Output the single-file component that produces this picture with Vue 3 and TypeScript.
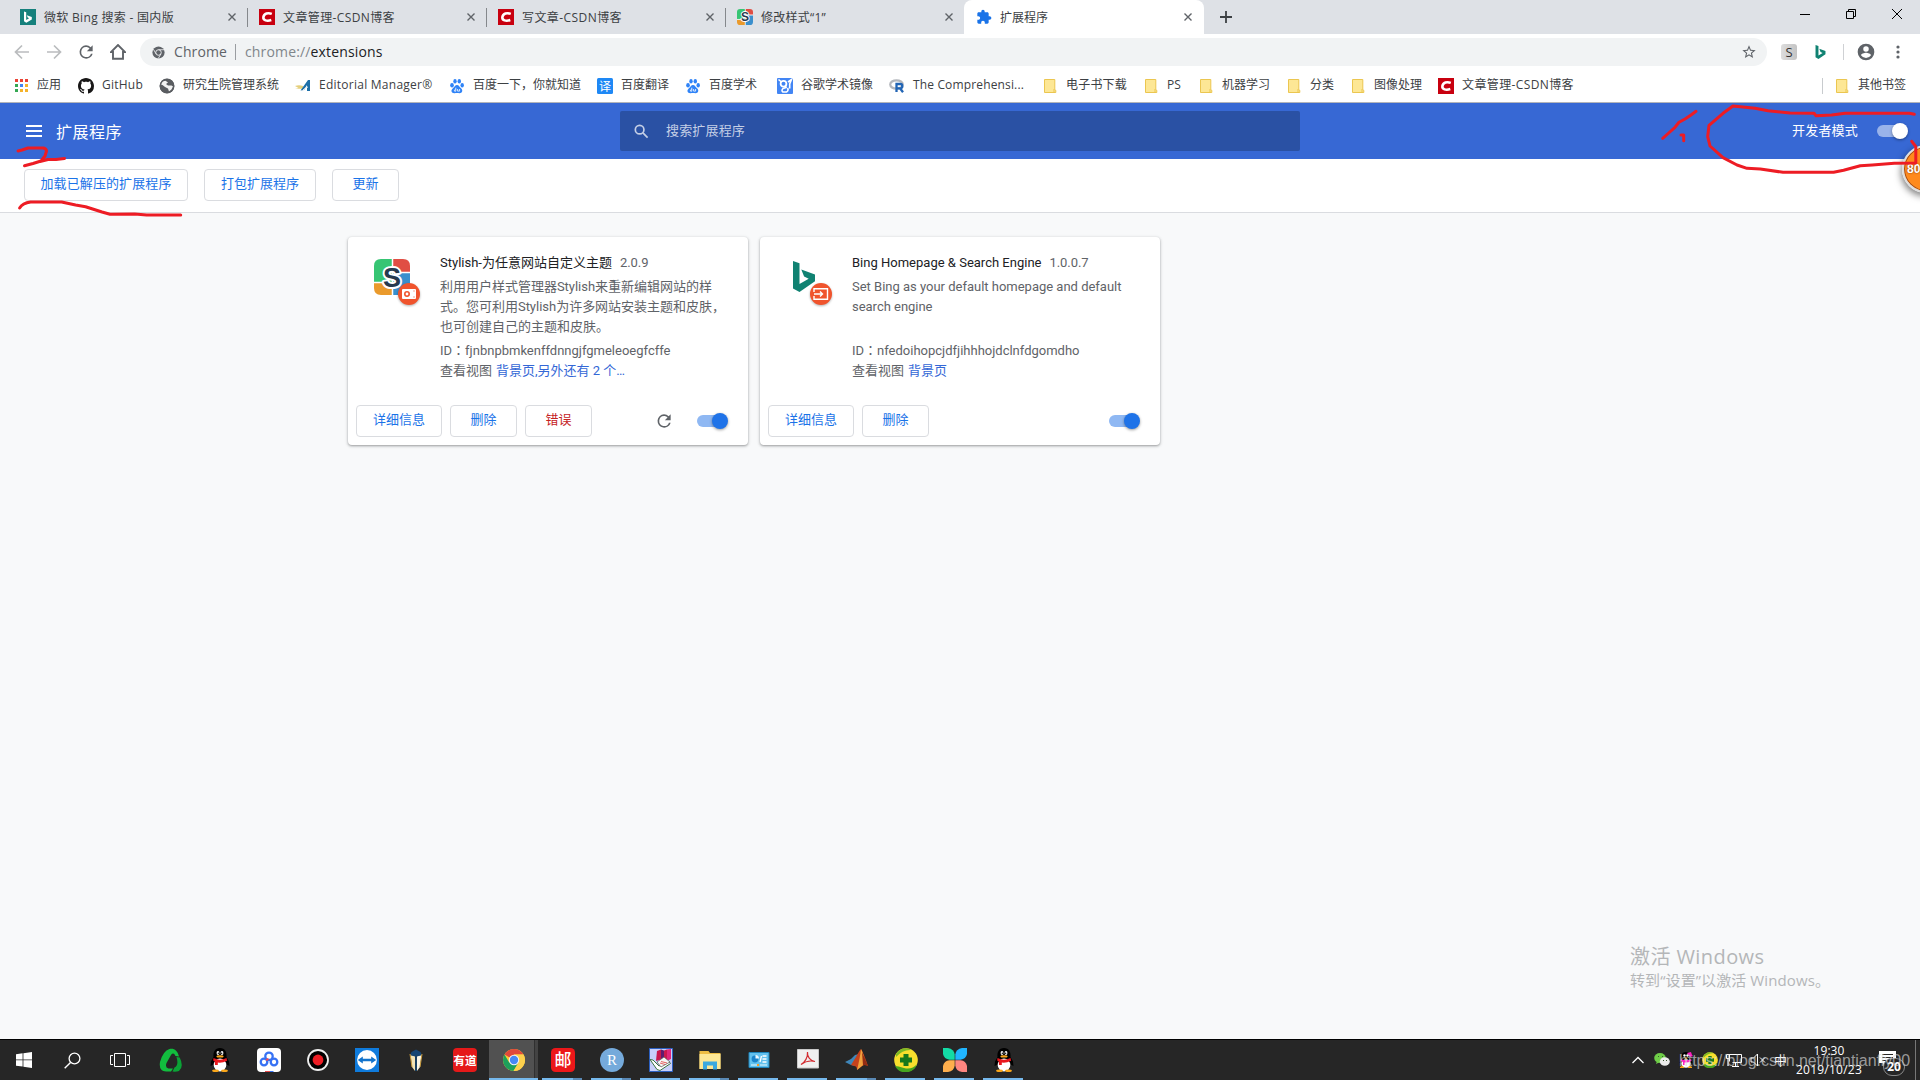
<script setup lang="ts">
import { ref } from 'vue'

interface Tab { icon: string; title: string; w: number; active?: boolean }
interface Bookmark { icon: string; label: string; w: number; step: number }
interface Extension {
  icon: string; name: string; nameW: number; version: string; versionW: number
  desc: { t: string; w: number }[]
  id: string; idW: number; view: string; viewW: number; error?: boolean; reload?: boolean
}

const tabs = ref<Tab[]>([
  { icon: 'bing', title: '微软 Bing 搜索 - 国内版', w: 130 },
  { icon: 'csdn', title: '文章管理-CSDN博客', w: 112 },
  { icon: 'csdn', title: '写文章-CSDN博客', w: 100 },
  { icon: 'stylish', title: '修改样式“1”', w: 65 },
  { icon: 'puzzle', title: '扩展程序', w: 48, active: true },
])

const bookmarks: Bookmark[] = [
  { icon: 'apps', label: '应用', w: 24, step: 65 },
  { icon: 'github', label: 'GitHub', w: 41, step: 81 },
  { icon: 'globe', label: '研究生院管理系统', w: 96, step: 136 },
  { icon: 'em', label: 'Editorial Manager®', w: 113.5, step: 154 },
  { icon: 'paw', label: '百度一下，你就知道', w: 108, step: 148 },
  { icon: 'yi', label: '百度翻译', w: 48, step: 88 },
  { icon: 'paw', label: '百度学术', w: 48, step: 92 },
  { icon: 'scholar', label: '谷歌学术镜像', w: 72, step: 112 },
  { icon: 'rproj', label: 'The Comprehensi...', w: 111, step: 153 },
  { icon: 'folder', label: '电子书下载', w: 61, step: 101 },
  { icon: 'folder', label: 'PS', w: 14, step: 55 },
  { icon: 'folder', label: '机器学习', w: 48, step: 88 },
  { icon: 'folder', label: '分类', w: 24, step: 64 },
  { icon: 'folder', label: '图像处理', w: 48, step: 88 },
  { icon: 'csdn', label: '文章管理-CSDN博客', w: 112, step: 135 },
]

const extensions = ref<Extension[]>([
  {
    icon: 'stylish', name: 'Stylish-为任意网站自定义主题', nameW: 172, version: '2.0.9', versionW: 28.5,
    desc: [
      { t: '利用用户样式管理器Stylish来重新编辑网站的样', w: 272 },
      { t: '式。您可利用Stylish为许多网站安装主题和皮肤，', w: 285 },
      { t: '也可创建自己的主题和皮肤。', w: 169 },
    ],
    id: 'fjnbnpbmkenffdnngjfgmeleoegfcffe', idW: 230.5, view: '背景页,另外还有 2 个…', viewW: 129,
    error: true, reload: true,
  },
  {
    icon: 'bing', name: 'Bing Homepage & Search Engine', nameW: 189.5, version: '1.0.0.7', versionW: 39,
    desc: [
      { t: 'Set Bing as your default homepage and default', w: 269.5 },
      { t: 'search engine', w: 80.5 },
    ],
    id: 'nfedoihopcjdfjihhhojdclnfdgomdho', idW: 227.5, view: '背景页', viewW: 39,
  },
])

const tasks = [
  { icon: 'green' }, { icon: 'qq' }, { icon: 'netdisk' }, { icon: 'rec' }, { icon: 'tv' }, { icon: 'lamp' }, { icon: 'youdao' },
  { icon: 'chrome', open: true, active: true }, { icon: 'mail', open: true, multi: true }, { icon: 'rstudio', open: true, multi: true },
  { icon: 'books', open: true }, { icon: 'explorer', open: true, multi: true }, { icon: 'panel', open: true }, { icon: 'pdf', open: true },
  { icon: 'matlab', open: true, multi: true }, { icon: 's360', open: true }, { icon: 'petals', open: true }, { icon: 'qq', open: true },
]

// Spreads the letters of a label so that it takes the given width.
const vFit = {
  mounted(el: HTMLElement, b: { value: number }) {
    const n = Array.from(el.textContent ?? '').length
    const natural = el.getBoundingClientRect().width
    el.style.letterSpacing = `${(b.value - natural) / n}px`
  },
}
</script>

<template>
  <div class="screen">
    <svg class="defs">
      <symbol id="bing" viewBox="0 0 16 16"><rect width="16" height="16" fill="#15807c" /><path d="M4 2.5l2.2.8v7.8l2.9-1.8-1.4-.7-.9-2.3 5 1.8v2.5l-5.5 3.2L4 12.300z" fill="#fff" /></symbol>
      <symbol id="bingb" viewBox="0 0 22 31"><path d="M0 0l6.500 2.300V23l9.200-5.300-4.600-2.100-2.800-7.200L22 13.500v6.800L6.500 31 0 27.400z" fill="#108272" /></symbol>
      <symbol id="csdn" viewBox="0 0 16 16"><rect width="16" height="16" fill="#c8000f" /><path d="M12.800 4.900C9 3.500 5 4.400 4.400 8c-.5 3.500 3.600 4.500 7.900 3.100" fill="none" stroke="#fff" stroke-width="2.600" /></symbol>
      <symbol id="stylish" viewBox="0 0 36 36">
        <path d="M7 0h11v23H0V7q0-7 7-7z" fill="#36c573" /><path d="M19 0h10q7 0 7 7v6H19z" fill="#e04e44" />
        <path d="M19 14h17v15q0 7-7 7H19z" fill="#3a8fcd" /><path d="M0 24h18v12H7q-7 0-7-7z" fill="#ea9a2c" />
        <path d="M18.500 0v36M0 23.500h18M19 13.500h17" stroke="#fff" stroke-width="1.500" />
        <text x="18" y="27.500" text-anchor="middle" font-family="Liberation Sans, sans-serif" font-size="27" font-weight="700" fill="#263a4f" stroke="#fff" stroke-width="4" paint-order="stroke" stroke-linejoin="round">S</text>
      </symbol>
      <symbol id="puzzle" viewBox="0 0 24 24"><path fill="#1a73e8" d="M20.500 11H19V7c0-1.100-.9-2-2-2h-4V3.500C13 2.100 11.900 1 10.500 1S8 2.100 8 3.500V5H4c-1.100 0-2 .9-2 2v3.800h1.500c1.500 0 2.700 1.200 2.700 2.700S5 16.200 3.500 16.200H2V20c0 1.100.9 2 2 2h3.800v-1.500c0-1.500 1.200-2.700 2.700-2.700s2.700 1.200 2.700 2.700V22H17c1.100 0 2-.9 2-2v-4h1.500c1.400 0 2.500-1.100 2.500-2.500S21.900 11 20.500 11z" /></symbol>
      <symbol id="apps" viewBox="0 0 16 16"><g fill="#ea4335"><path d="M2 1h3v3H2zM7 1h3v3H7zM12 1h3v3h-3z" /></g><path fill="#34a853" d="M2 6h3v3H2zM2 11h3v3H2z" /><path fill="#4285f4" d="M7 6h3v3H7z" /><path fill="#f5b32b" d="M12 6h3v3h-3zM7 11h3v3H7zM12 11h3v3h-3z" /></symbol>
      <symbol id="github" viewBox="0 0 16 16"><path fill="#181717" d="M8 0C3.580 0 0 3.580 0 8c0 3.540 2.290 6.530 5.470 7.590.4.070.55-.17.55-.38 0-.19-.01-.82-.01-1.490-2.010.37-2.530-.49-2.690-.94-.09-.23-.48-.94-.82-1.130-.28-.15-.68-.52-.01-.53.63-.01 1.080.58 1.230.82.72 1.210 1.870.87 2.330.66.070-.52.28-.87.51-1.070-1.780-.2-3.640-.89-3.640-3.950 0-.87.31-1.590.82-2.150-.08-.2-.36-1.020.08-2.120 0 0 .67-.21 2.200.82.640-.18 1.320-.27 2-.27s1.360.09 2 .27c1.530-1.040 2.200-.82 2.200-.82.440 1.100.16 1.920.08 2.120.51.56.82 1.270.82 2.150 0 3.070-1.870 3.750-3.650 3.950.29.25.54.73.54 1.480 0 1.070-.01 1.930-.01 2.200 0 .21.15.46.55.38A8.010 8.010 0 0016 8c0-4.420-3.580-8-8-8z" /></symbol>
      <symbol id="globe" viewBox="0 0 16 16"><circle cx="8" cy="8" r="7.300" fill="#5a5d61" /><path d="M3 3.500l3.500-.7L9 4.500 7 6l2 1.500h3.500l1.500 1-1.500 3-2.500 2-1-3L6 9 3.500 7 2 6.500z" fill="#fff" opacity=".92" /><circle cx="8" cy="8" r="6.800" fill="none" stroke="#5a5d61" stroke-width="1.300" /></symbol>
      <symbol id="em" viewBox="0 0 16 16"><path d="M0 8q4-1.500 8 0l2 2.800H0L3.500 10z" fill="#e5cf7c" /><path d="M13 2L5.500 12.500 9 12l3-5v6h3V2z" fill="#1d6fa8" /><path d="M8 12q3-3 5-3" stroke="#e8f1f6" stroke-width="1" fill="none" /></symbol>
      <symbol id="paw" viewBox="0 0 16 16"><g fill="#2f83f7"><ellipse cx="3" cy="7.200" rx="1.800" ry="2.200" /><ellipse cx="6" cy="3.300" rx="1.700" ry="2.300" /><ellipse cx="10.300" cy="3.300" rx="1.700" ry="2.300" /><ellipse cx="13.200" cy="7.200" rx="1.700" ry="2.200" /><path d="M8 7c2 0 2.500 2 4 3.300 2.500 2.300 1 5-1.500 4.900-2-.3-3-.3-5 0-2.800.2-4.300-2.500-1.600-4.900C5.500 9 6 7 8 7z" /></g><path d="M6.800 9.700v3.500H5.600q-1-1 1-2M8.600 11v2.100h2V11" stroke="#fff" stroke-width=".8" fill="none" /></symbol>
      <symbol id="yi" viewBox="0 0 16 16"><rect width="16" height="16" rx="1.500" fill="#1e88f5" /><text x="8" y="12.500" text-anchor="middle" font-size="12" font-family="Noto Sans CJK SC, sans-serif" fill="#fff">译</text></symbol>
      <symbol id="scholar" viewBox="0 0 16 16"><rect width="16" height="16" rx="1" fill="#4285f4" /><circle cx="6.500" cy="5.800" r="2.900" fill="none" stroke="#fff" stroke-width="1.800" /><path d="M1.500 1.500l3 2.500M8.500 8l.5 1.500-3 1q-2 2 0 3.500h3.500q2.500-1.500 1-4M11 4l3.500-2.500L12.700 6v4.500" fill="none" stroke="#fff" stroke-width="1.600" /></symbol>
      <symbol id="rproj" viewBox="0 0 16 16"><ellipse cx="7.500" cy="6.500" rx="6.300" ry="4.200" fill="none" stroke="#b4b7bd" stroke-width="2.200" /><path d="M7.500 14V6h3.800q2 0 2 2.200t-2 2.100H8M11 10.200l3 4" fill="none" stroke="#2265b5" stroke-width="2.300" /></symbol>
      <symbol id="folder" viewBox="0 0 16 16"><path d="M2.500 1.500h10.300v10.200l1 .6v2.200H2.500z" fill="#fde795" stroke="#ebc650" /><path d="M12 14v-3" stroke="#ebc650" /></symbol>
      <symbol id="reload" viewBox="0 0 24 24"><path d="M17.650 6.350A7.960 7.960 0 0012 4a8 8 0 108 10h-2.080A6 6 0 1112 6c1.660 0 3.140.69 4.220 1.780L13 11h7V4z" /></symbol>
      <symbol id="star" viewBox="0 0 24 24"><path fill="#5f6368" d="M22 9.240l-7.190-.62L12 2 9.190 8.630 2 9.240l5.460 4.730L5.820 21 12 17.270 18.180 21l-1.630-7.030zM12 15.400l-3.760 2.270 1-4.280-3.320-2.880 4.380-.38L12 6.100l1.710 4.040 4.380.38-3.320 2.880 1 4.280z" /></symbol>
      <symbol id="user" viewBox="0 0 24 24"><path fill="#5f6368" d="M12 2a10 10 0 100 20 10 10 0 000-20zm0 3a3.300 3.300 0 110 6.600A3.300 3.300 0 0112 5zm0 14.200a7.200 7.200 0 01-6-3.200c0-2 4-3.100 6-3.100s6 1.100 6 3.100a7.200 7.200 0 01-6 3.200z" /></symbol>
      <symbol id="chromeg" viewBox="0 0 16 16"><circle cx="8" cy="8" r="7.500" fill="#5f6368" /><circle cx="8" cy="8" r="3.400" fill="none" stroke="#f1f3f4" stroke-width="1.100" /><path d="M8 4.600h7M5 9.700L1.700 4M11 9.700L7.600 15.500" stroke="#f1f3f4" stroke-width="1" /></symbol>
      <symbol id="green" viewBox="0 0 24 24"><path d="M10.500 1C15 0 18.500 2.500 20 8.500L16.500 8Q14.500 3.800 12 7L7.500 15q-1.700 4.500 2 5.500h4.500L12 23.500H7Q-.5 23 1 14 4 3 10.500 1z" fill="#12bd3e" /><path d="M17.500 9l3.200.5q4.500 9-.7 13.500-3 1-6.500.5l2-4q4.500-2 2-10.500z" fill="#0ba236" /></symbol>
      <symbol id="qq" viewBox="0 0 24 24"><path d="M12 0c-5 0-7 4-6.500 9L3 13.500 2.500 18l3-1.500h13l3 1.500-.5-4.500L18.500 9C19 4 17 0 12 0z" fill="#000" /><ellipse cx="12" cy="17" rx="6.300" ry="6.500" fill="#fff" /><ellipse cx="10" cy="5" rx="1.400" ry="2" fill="#fff" /><ellipse cx="14" cy="5" rx="1.400" ry="2" fill="#fff" /><circle cx="10.300" cy="5.300" r=".7" /><circle cx="13.700" cy="5.300" r=".7" /><ellipse cx="12" cy="8.400" rx="3.600" ry="1.200" fill="#f9a61a" /><path d="M5.500 10q6.500 3.500 13 0l.6 2.700q-5 2.500-9.300 1.800v2.600H7l-.2-3.500-1.600-1z" fill="#e8181e" /><ellipse cx="7.500" cy="22.700" rx="3.400" ry="1.300" fill="#f9a61a" /><ellipse cx="16.500" cy="22.700" rx="3.400" ry="1.300" fill="#f9a61a" /></symbol>
      <symbol id="qqpink" viewBox="0 0 16 16"><path d="M8 0C4 0 3 3 3.500 6L1.500 11h13l-2-5C13 3 12 0 8 0z" fill="#000" /><path d="M9 1l4-1 1 3 1 1-3 1z" fill="#ff1fc4" /><ellipse cx="8" cy="11.500" rx="4.600" ry="4.200" fill="#fff" /><circle cx="6.500" cy="3.500" r="1.200" fill="#fff" /><circle cx="9.500" cy="3.500" r="1.200" fill="#fff" /><path d="M5.500 5.500h5L8 7z" fill="#f9a61a" /><path d="M3 7q5 2.500 10 0l.5 2q-4 2-7 1.500V13H5v-3L2.500 9z" fill="#ff1fc4" /><path d="M2 15q2-2 4 0v1H2zM10 15q2-2 4 0v1h-4z" fill="#f9a61a" /></symbol>
      <symbol id="netdisk" viewBox="0 0 24 24"><rect width="24" height="24" rx="4" fill="#fff" /><g fill="none" stroke="#3772f4" stroke-width="2.300"><circle cx="12" cy="8.300" r="3.700" /><circle cx="7" cy="14" r="3.300" /><circle cx="17" cy="14" r="3.300" /></g><path d="M9 12l2.500-1" stroke="#f04a55" stroke-width="2" /><path d="M8 23h5v1.500H8z" fill="#e84a4a" /><path d="M13 23h3.500v1.500H13z" fill="#3772f4" /></symbol>
      <symbol id="rec" viewBox="0 0 24 24"><circle cx="12" cy="12" r="10" fill="#000" stroke="#eee" stroke-width="1.800" /><circle cx="12" cy="12" r="5.400" fill="#ed1d24" /></symbol>
      <symbol id="tv" viewBox="0 0 24 24"><rect width="24" height="24" fill="#0f7bdc" /><circle cx="12" cy="12" r="9.900" fill="#fff" /><path d="M2.800 12l5-3.500v2.300h8.400V8.500l5 3.500-5 3.500v-2.300H7.800v2.300z" fill="#1273cc" /></symbol>
      <symbol id="lamp" viewBox="0 0 24 24"><path d="M6.500 7l4.500 1v15l-3-4z" fill="#f3e4b6" /><path d="M17.500 7L13 8v15l3-4z" fill="#fbf6e4" /><path d="M7.500 4L12 1.500 16.500 4 18 7l-5 1.500h-2L6 7z" fill="#164673" /><path d="M6 6l2 13M18 6l-2 13" stroke="#c99b3c" stroke-width="1" /><path d="M12 7v16" stroke="#1b4468" stroke-width="1.800" /></symbol>
      <symbol id="youdao" viewBox="0 0 24 24"><rect width="24" height="24" rx="4" fill="#e51919" /><text x="12" y="16.500" text-anchor="middle" font-size="11.500" font-weight="700" font-family="Noto Sans CJK SC, sans-serif" fill="#fff">有道</text></symbol>
      <symbol id="mail" viewBox="0 0 24 24"><rect width="24" height="24" rx="4.500" fill="#ec1719" /><text x="12" y="18" text-anchor="middle" font-size="17" font-weight="500" font-family="Noto Sans CJK SC, sans-serif" fill="#fff">邮</text></symbol>
      <symbol id="chrome" viewBox="0 0 24 24"><circle cx="12" cy="12" r="11" fill="#fcc934" /><path d="M12 12L2.500 6.500A11 11 0 0121.500 6.500H12z" fill="#e0483b" /><path d="M2.500 6.500A11 11 0 0011.500 23L16.500 14.500 12 12 7.200 14.500z" fill="#1da05b" /><path d="M12 6.500h9.500A11 11 0 0111.500 23l5.200-8.500z" fill="#fdd04d" /><circle cx="12" cy="12" r="5.200" fill="#f5f5f5" /><circle cx="12" cy="12" r="4.200" fill="#4688f4" /></symbol>
      <symbol id="rstudio" viewBox="0 0 24 24"><circle cx="12" cy="12" r="12" fill="#75aadb" /><text x="12" y="17" text-anchor="middle" font-size="15" font-family="Liberation Serif, serif" fill="#fff">R</text></symbol>
      <symbol id="books" viewBox="0 0 24 24"><path d="M.5.500h23v23H.5z" fill="#c8cffa" stroke="#2c60c0" /><path d="M8 3l4-1.500v10L7 13z" fill="#c9184d" /><path d="M12 1.500l3 1v10l-3-1z" fill="#5f1a70" /><path d="M15 2.500l3-1V12l-3 1z" fill="#c9184d" /><path d="M18 1.500l4-.5v10l-4 2z" fill="#e0267d" /><path d="M1 11.500l3 .5 6 6 10-4.500 1.500 2L11 22.500l-3-1z" fill="#fff" stroke="#397440" /><path d="M8 14l7-5 6 5-9 5z" fill="#f5f5f5" stroke="#555" stroke-width=".7" /><path d="M12 13.500l6 1.500M11 15l5 1.500" stroke="#d22" stroke-width=".7" /></symbol>
      <symbol id="explorer" viewBox="0 0 24 24"><path d="M1.500 3h9l1.500 2h10.500v16h-21z" fill="#eebd43" /><path d="M1.500 6h21v15h-21z" fill="#fde795" /><path d="M5 21.500v-8h14v8h-4v-4H9v4z" fill="#3ca9df" /></symbol>
      <symbol id="panel" viewBox="0 0 24 24"><path d="M2 4.500h20v15H2z" fill="#62c1ef" stroke="#1e84bb" /><circle cx="8" cy="11" r="3.400" fill="#1b85cd" /><path d="M8.500 10.500V7A3.600 3.600 0 0112 10.500z" fill="#eefaff" /><path d="M15.500 8h4M15.500 11h4M15.500 14h4M14.500 8l-1.500 6" fill="none" stroke="#fff" stroke-width="1.300" /><path d="M4 17h6M13 17h7" stroke="#e9fbff" /><path d="M10 16h2v2h-2z" fill="#f89d22" /></symbol>
      <symbol id="pdf" viewBox="0 0 24 24"><path d="M1.500 1.500h21v18.500h-21z" fill="#f0f0f0" stroke="#c9c9c9" /><path d="M5 16.500C9 14.500 12 9 11.500 4c-.5 5 3 9 7.500 9.500-4-1-10 0-14 3z" fill="none" stroke="#d32c31" stroke-width="1.200" /></symbol>
      <symbol id="matlab" viewBox="0 0 24 24"><path d="M0 14l6-3 4-4 4-1-4 12-4-1z" fill="#3f86b9" /><path d="M6 17l5-8q3-6 5-8 3 5 7 17-4-2-6 0l-5 4q0-4-3-4z" fill="#c6421c" /><path d="M16 1q-1 9-4 21l5-4q2-2 3-1Q19 6 16 1z" fill="#f1a23e" /><path d="M17 4q3 7 6 14-3-1.500-5-.5z" fill="#932d13" /></symbol>
      <symbol id="s360" viewBox="0 0 24 24"><circle cx="12" cy="12" r="11.800" fill="#f8df2d" /><path d="M1 18A12 12 0 0023 16q-5 6-13 4-6-2-9-2z" fill="#46a51f" /><path d="M2 6Q8-3 18 2 9 1 2 9z" fill="#7dba25" /><path d="M9.500 6h5v3.500H18v5h-3.500V18h-5v-3.500H6v-5h3.500z" fill="#18781b" /></symbol>
      <symbol id="petals" viewBox="0 0 24 24"><path d="M0 0h5q6 1 6.700 6.500v5.200H6.500Q1 11 0 6z" fill="#13dba5" /><path d="M24 0h-5q-6 1-6.700 6.500v5.200h5.200Q23 11 24 6z" fill="#20b5ff" /><path d="M0 24h5q6-1 6.700-6.500v-5.200H6.500Q1 13 0 18z" fill="#ffae4c" /><path d="M24 24h-5q-6-1-6.700-6.500v-5.200h5.200Q23 13 24 18z" fill="#ff8680" /></symbol>
    </svg>

    <header class="tabstrip">
      <div v-for="(t, i) in tabs" :key="i" class="tab" :class="{ active: t.active, sep: i < 3 }">
        <svg class="i16"><use :href="'#' + t.icon" /></svg>
        <span v-fit="t.w" class="tabtitle">{{ t.title }}</span>
        <svg class="x" viewBox="0 0 8 8"><path d="M.5.500l7 7M7.500.500l-7 7" stroke="#5f6368" stroke-width="1.400" /></svg>
      </div>
      <svg class="plus" viewBox="0 0 12 12"><path d="M6 0v12M0 6h12" stroke="#3c4043" stroke-width="1.800" /></svg>
      <div class="winbtns">
        <svg viewBox="0 0 10 10"><path d="M0 5.500h10" stroke="#000" /></svg>
        <svg viewBox="0 0 10 10"><path d="M.5 2.500h7v7h-7zM2.500 2.500v-2h7v7h-2" fill="none" stroke="#000" /></svg>
        <svg viewBox="0 0 10 10"><path d="M0 0l10 10M10 0L0 10" stroke="#000" /></svg>
      </div>
    </header>

    <nav class="toolbar">
      <svg class="nav" viewBox="0 0 16 16"><path d="M15 8H2M8 1.500L1.500 8 8 14.500" fill="none" stroke="#babcbe" stroke-width="1.700" /></svg>
      <svg class="nav" viewBox="0 0 16 16"><path d="M1 8h13M8 1.500L14.500 8 8 14.500" fill="none" stroke="#babcbe" stroke-width="1.700" /></svg>
      <svg class="nav big" fill="#5f6368"><use href="#reload" /></svg>
      <svg class="nav" viewBox="0 0 16 16"><path d="M3 14.800V8H1L8 1l7 7h-2v6.800z" fill="none" stroke="#5f6368" stroke-width="1.900" /></svg>
      <div class="omnibox">
        <svg class="site"><use href="#chromeg" /></svg>
        <span v-fit="53" class="scheme">Chrome</span>
        <i class="bar"></i>
        <span v-fit="137.500" class="url"><b>chrome://</b>extensions</span>
        <svg class="star"><use href="#star" /></svg>
      </div>
      <div class="actions">
        <span class="sicon">S</span>
        <svg class="bicon"><use href="#bingb" /></svg>
        <i></i>
        <svg class="user"><use href="#user" /></svg>
        <svg class="dots" viewBox="0 0 4 14"><circle cx="2" cy="2" r="1.600" /><circle cx="2" cy="7" r="1.600" /><circle cx="2" cy="12" r="1.600" /></svg>
      </div>
    </nav>

    <div class="bookmarks">
      <div v-for="(b, i) in bookmarks" :key="i" class="bm" :style="{ width: b.step + 'px' }">
        <svg class="i16"><use :href="'#' + b.icon" /></svg><span v-fit="b.w">{{ b.label }}</span>
      </div>
      <div class="bm other"><svg class="i16"><use href="#folder" /></svg><span v-fit="48">其他书签</span></div>
    </div>

    <div class="appbar">
      <div class="burger"><i></i><i></i><i></i></div>
      <h1 v-fit="66">扩展程序</h1>
      <div class="search">
        <svg viewBox="0 0 16 16"><circle cx="6" cy="6" r="4.600" /><path d="M9.500 9.500l5 5" /></svg>
        <span v-fit="79">搜索扩展程序</span>
      </div>
      <span v-fit="66" class="devlabel">开发者模式</span>
      <div class="toggle light"><i></i></div>
    </div>

    <div class="devbar">
      <button class="load"><span v-fit="131">加载已解压的扩展程序</span></button>
      <button class="pack"><span v-fit="78">打包扩展程序</span></button>
      <button class="upd"><span v-fit="26">更新</span></button>
    </div>

    <main>
      <section v-for="e in extensions" :key="e.name" class="card">
        <div class="info">
          <div class="pic" :class="e.icon">
            <svg v-if="e.icon === 'stylish'" class="logo"><use href="#stylish" /></svg>
            <svg v-else class="logo"><use href="#bingb" /></svg>
            <svg class="badge" viewBox="0 0 22 22">
              <circle cx="11" cy="11" r="11" fill="#f0542d" />
              <template v-if="e.icon === 'stylish'">
                <rect x="4" y="6" width="14" height="10" rx="1" fill="#fff" /><circle cx="9" cy="11" r="2.200" fill="none" stroke="#f0542d" stroke-width="1.600" /><path d="M15.500 7.500h1v1h-1zM15.500 13.500h1v1h-1z" fill="#f0542d" />
              </template>
              <path v-else d="M4 9V5.700h13.500v10.600H4V13M4 11h8M10 8.500l2.500 2.500-2.500 2.500" fill="none" stroke="#fff" stroke-width="1.400" />
            </svg>
          </div>
          <div class="txt">
            <div class="name"><span v-fit="e.nameW">{{ e.name }}</span><span v-fit="e.versionW" class="ver">{{ e.version }}</span></div>
            <div class="desc"><div v-for="d in e.desc" :key="d.t"><span v-fit="d.w">{{ d.t }}</span></div></div>
            <div class="row"><span v-fit="e.idW">ID<b class="colon">：</b>{{ e.id }}</span></div>
            <div class="row view"><span v-fit="52">查看视图</span><a v-fit="e.viewW">{{ e.view }}</a></div>
          </div>
        </div>
        <div class="btns">
          <button class="wide"><span v-fit="52">详细信息</span></button>
          <button><span v-fit="26">删除</span></button>
          <button v-if="e.error" class="err"><span v-fit="26">错误</span></button>
          <svg v-if="e.reload" class="reload" fill="#5f6368"><use href="#reload" /></svg>
          <div class="toggle"><i></i></div>
        </div>
      </section>
    </main>

    <footer class="taskbar">
      <div class="sys"><svg width="16" height="16" viewBox="0 0 16 16"><path fill="#fff" d="M0 2.300l6.600-1v6.200H0zM7.400 1.200L16 0v7.500H7.400zM0 8.300h6.600v6.300L0 13.700zM7.400 8.300H16V16l-8.600-1.300z" /></svg></div>
      <div class="sys"><svg width="17" height="17" viewBox="0 0 17 17"><circle cx="10.500" cy="6.500" r="5.400" fill="none" stroke="#fff" stroke-width="1.300" /><path d="M6.500 10.500L.7 16.300" stroke="#fff" stroke-width="1.400" /></svg></div>
      <div class="sys tv"><svg width="20" height="16" viewBox="0 0 20 16"><path d="M4.500 1.500h11v13h-11zM3 3.500H.5v9H3M17 3.500h2.500v9H17" fill="none" stroke="#fff" /></svg></div>
      <div v-for="(t, i) in tasks" :key="i" class="task" :class="{ open: t.open, active: t.active, multi: t.multi }">
        <svg width="24" height="24"><use :href="'#' + t.icon" /></svg>
      </div>
      <div class="tray">
        <svg width="12" height="8" viewBox="0 0 12 8"><path d="M.5 7L6 1.500 11.500 7" fill="none" stroke="#fff" stroke-width="1.300" /></svg>
        <svg width="16" height="16" viewBox="0 0 16 16"><ellipse cx="6" cy="6" rx="5.800" ry="5" fill="#6fce48" /><path d="M2 12l1-3 3 1z" fill="#6fce48" /><ellipse cx="10.800" cy="9.500" rx="5" ry="4.300" fill="#ececec" /><path d="M4 4.500h1M8 4.500h1M9 8.500h1M12 8.500h1" stroke="#3a5a30" /></svg>
        <svg width="16" height="16"><use href="#qqpink" /></svg>
        <svg width="16" height="16"><use href="#s360" /></svg>
        <svg width="16" height="16" viewBox="0 0 16 16"><path d="M3.500 9.500v-7h12v8h-9M9.500 11v3M6 14.500h7M.5 2.500h3v4h-3zM2 7v7" fill="none" stroke="#fff" /></svg>
        <svg width="16" height="16" viewBox="0 0 16 16"><path d="M1 6h2.500L7.500 2v12L3.500 10H1zM10 5.500l5 5M15 5.500l-5 5" fill="none" stroke="#fff" /></svg>
        <span class="ime">中</span>
        <div class="clock"><span v-fit="31">19:30</span><span v-fit="66">2019/10/23</span></div>
        <div class="note"><svg width="18" height="16" viewBox="0 0 18 16"><path d="M0 0h17v12H8l-4 4v-4H0z" fill="#fff" /><path d="M3 3.500h11M3 6.500h11M3 9.500h7" stroke="#262626" /></svg><b>20</b></div>
      </div>
      <i class="peek"></i>
    </footer>

    <div class="activate"><div><span v-fit="134.500">激活 Windows</span></div><p><span v-fit="200">转到“设置”以激活 Windows。</span></p></div>
    <div class="ball">80</div>
    <svg class="ink" viewBox="0 0 1920 1080">
      <path d="M18 151l4-1 6-2h15.500q3 1 3 3L45 156l-4 5-8 2.500-8.500 2.300M40 161.500l8-2h8l8.500-1" />
      <path d="M19.600 208q3-5 11-6h31l14 3 10 1.700L102 212l8 2.300 24.700-.3 12 1h34" />
      <path d="M1662.700 138.300l6-5.300 6.300-5.700 4-5 6-3.300 6-4 5-3.700M1681 135h2.700v5.700" />
      <path d="M1914.300 114.300l-5-1H1845l-13.300 1.700-15.700.7-2-2.400-24-.3-22-2.300-13-2.400-22-2.300-10 7.300-14 12-1.300 11.400 2.300 9.300 13 11.700 14 7.300 10 3.300 13.300.7 22.700 3.300h50.600l10-2 16.700-4.600 12-.7 22-1.700 21.500-.3v-16.300l-4-5.400" />
    </svg>
    <div class="wm"><span v-fit="231">https://blog.csdn.net/tiantianfly00</span></div>
  </div>
</template>

<style>
body { margin: 0; overflow: hidden; }
</style>

<style scoped>
.screen { position: relative; width: 1920px; height: 1080px; display: flex; flex-direction: column; overflow: hidden; background: #f8f9fa; font-family: "Open Sans", "Noto Sans CJK SC", sans-serif; font-size: 12px; color: #3c4043; box-sizing: border-box; }
.screen *, .screen *::before, .screen *::after { box-sizing: border-box; }
span, a { white-space: nowrap; display: inline-block; }
svg { flex: none; display: block; }
svg.defs { display: none; }
.i16 { width: 16px; height: 16px; }
.tabstrip { height: 34px; flex: none; background: #dee1e6; display: flex; align-items: center; padding-left: 8px; }
.tab { width: 239px; height: 34px; display: flex; align-items: center; padding: 0 12px; position: relative; }
.tab.sep::after { content: ""; position: absolute; right: -1px; top: 8px; height: 19px; width: 1px; background: #85888c; }
.tab.active { background: #fff; border-radius: 8px 8px 0 0; width: 240px; }
.tabtitle { margin-left: 8px; line-height: 16px; padding-top: 1px; }
.x { width: 8px; height: 8px; margin-left: auto; }
.tab .x { margin-right: -1px; }
.tab.active .x { margin-right: 0; }
.plus { width: 12px; height: 12px; margin-left: 16px; }
.winbtns { margin-left: auto; display: flex; gap: 36px; padding-right: 18px; margin-top: -6px; }
.winbtns svg { width: 10px; height: 10px; }
.toolbar { height: 36px; flex: none; background: #fff; display: flex; align-items: center; padding-left: 14px; margin-bottom: -1px; }
.nav { width: 16px; height: 16px; margin-right: 16px; }
.nav.big { width: 20px; height: 20px; margin: 0 14px 0 -2px; }
.omnibox { margin-left: -2px; width: 1627px; height: 28px; border-radius: 14px; background: #f1f3f4; display: flex; align-items: center; padding: 0 10px 0 11px; font-size: 14px; color: #5f6368; }
.site { width: 13px; height: 13px; margin-left: 1px; }
.scheme { margin-left: 9px; }
.scheme, .url { padding-bottom: 2px; }
.bar { width: 1px; height: 16px; background: #9a9da1; margin: 0 9px 0 8px; }
.url { color: #202124; }
.url b { font-weight: 400; color: #80868b; }
.star { width: 16px; height: 16px; margin-left: auto; }
.actions { display: flex; align-items: center; }
.sicon { width: 16px; height: 16px; margin-left: 14px; border-radius: 3px; background: linear-gradient(90deg, #ddd, #c4c4c4); text-align: center; line-height: 16px; font-size: 13px; color: #333; }
.bicon { width: 11px; height: 14px; margin-left: 18px; }
.actions i { width: 1px; height: 16px; background: #cfd1d4; margin: 0 12px 0 17px; }
.user { width: 20px; height: 20px; }
.dots { width: 4px; height: 14px; margin-left: 20px; fill: #5f6368; }
.bookmarks { height: 34px; flex: none; background: #fff; border-bottom: 1px solid #b2b4ba; display: flex; align-items: center; padding-left: 13px; }
.bm { display: flex; align-items: center; gap: 8px; line-height: 16px; }
.bm span { padding-bottom: 2px; }
.other { margin-left: auto; padding: 0 14px 0 11px; border-left: 1px solid #c8cbce; height: 16px; }
.appbar { height: 56px; flex: none; background: #3768d4; color: #fff; display: flex; align-items: center; }
.burger { width: 16px; margin-left: 26px; display: flex; flex-direction: column; gap: 3px; }
.burger i { height: 2px; background: #fff; }
h1 { margin: 2px 0 0 14px; font-size: 16px; font-weight: 400; line-height: 24px; white-space: nowrap; }
.search { width: 680px; height: 40px; margin: 0 0 0 498px; border-radius: 2px; background: #2a51a4; display: flex; align-items: center; font-size: 13px; color: #c4cfe6; }
.search svg { width: 15px; height: 15px; margin: 0 17px 0 14px; fill: none; stroke: #c4cfe6; stroke-width: 1.8; }
.search span { padding-bottom: 4px; }
.devlabel { margin-left: auto; font-size: 13px; padding-bottom: 4px; }
.toggle { width: 31px; height: 16px; position: relative; display: flex; align-items: center; justify-content: flex-end; }
.toggle::before { content: ""; position: absolute; left: 0; top: 2px; width: 28px; height: 12px; border-radius: 6px; background: #8fb8f3; }
.toggle i { position: relative; width: 16px; height: 16px; border-radius: 50%; background: #1f73e8; box-shadow: 0 1px 3px rgba(0,0,0,.4); }
.toggle.light { margin: 0 12px 0 19px; }
.toggle.light::before { background: #99b3ea; }
.toggle.light i { background: #fff; }
.devbar { height: 54px; flex: none; background: #fff; border-bottom: 1px solid #dadce0; display: flex; align-items: flex-start; padding: 10px 0 0 24px; gap: 16px; }
button { height: 32px; border: 1px solid #dadce0; border-radius: 4px; background: #fff; padding: 0 0 2px; color: #1a73e8; font: 13px/20px Roboto, "Noto Sans CJK SC", sans-serif; display: flex; align-items: center; justify-content: center; }
.devbar .load { width: 164px; }
.devbar .pack { width: 112px; }
.devbar .upd { width: 67px; }
main { flex: 1; display: flex; align-items: flex-start; gap: 12px; padding: 24px 0 0 348px; font-family: Roboto, "Noto Sans CJK SC", sans-serif; font-size: 13px; color: #5f6368; }
.card { width: 400px; height: 208px; border-radius: 4px; background: #fff; box-shadow: 0 1px 2px rgba(60,64,67,.35), 0 1px 3px 1px rgba(60,64,67,.15); display: flex; flex-direction: column; }
.info { flex: 1; display: flex; padding-top: 15px; }
.pic { width: 92px; padding: 7px 0 0 26px; position: relative; }
.pic .logo { width: 36px; height: 36px; }
.pic.bing .logo { width: 22px; height: 31px; margin: 2px 0 0 7px; }
.badge { position: absolute; left: 50px; top: 31px; width: 22px; height: 22px; filter: drop-shadow(0 1px 1px rgba(0,0,0,.3)); }
.txt { padding-top: 1px; }
.name { height: 20px; line-height: 20px; color: #202124; display: flex; }
.ver { margin-left: 8px; color: #5f6368; }
.desc { height: 60px; margin: 4px 0; line-height: 20px; }
.desc div { height: 20px; }
.row { height: 20px; line-height: 20px; display: flex; gap: 4px; }
.colon { font-weight: 400; font-family: "Noto Sans CJK TC", sans-serif; line-height: 1; }
a { color: #3367d6; }
.btns { height: 40px; display: flex; gap: 8px; padding: 0 20px 8px 8px; align-items: center; }
.btns button { width: 67px; }
.btns .wide { width: 86px; }
.btns .err { color: #c5221f; }
.reload { width: 20px; height: 20px; margin-left: auto; margin-right: 15px; }
.btns .toggle { margin-left: auto; }
.btns .reload + .toggle { margin-left: 0; }
.taskbar { height: 41px; flex: none; background: #262626; border-top: 1px solid #000; display: flex; color: #fff; position: relative; }
.sys { width: 48px; display: flex; align-items: center; justify-content: center; }
.sys.tv { width: 50px; padding-right: 2px; }
.task { width: 49px; display: flex; align-items: center; justify-content: center; position: relative; }
.task.open::after { content: ""; position: absolute; left: 4px; bottom: 0; height: 2px; width: 40px; background: #76b9ed; }
.task.multi::after { background: linear-gradient(90deg, #76b9ed 31px, #5a89b5 31px); }
.task.active { background: linear-gradient(90deg, #515151 45px, #303030 45px, #303030 46px, #434343 46px, #434343 49px); }
.task.active::after { left: 0; width: 49px; }
.tray { margin-left: auto; display: flex; align-items: center; gap: 8px; padding-right: 15px; }
.tray > svg:first-child { margin-right: 2px; }
.ime { width: 14px; font-size: 13px; line-height: 20px; }
.clock { display: flex; flex-direction: column; align-items: center; line-height: 19px; font-size: 12px; width: 68px; margin-left: -1px; }
.note { position: relative; width: 26px; height: 26px; margin-left: 8px; padding-top: 4px; }
.note b { position: absolute; left: 4px; top: 11px; width: 22px; height: 18px; border-radius: 9px; border: 1px solid #888; background: #262626; text-align: center; line-height: 15px; font-size: 12px; }
.peek { position: absolute; right: 4px; top: 0; width: 1px; height: 40px; background: #777; }
.activate { position: absolute; left: 1630px; top: 944px; color: #b4b6b8; font-size: 20px; line-height: 26px; }
.activate p { margin: -1px 0 0; font-size: 15px; line-height: 22px; }
.ball { position: absolute; left: 1902px; top: 145px; width: 48px; height: 48px; border-radius: 50%; background: radial-gradient(circle, #ff8a1c 60%, #ff9b2f); border: 2px solid #ddd; box-shadow: inset 0 0 0 1px #a64b12, -1px 3px 7px rgba(0,0,0,.5); color: #fff; font: 700 12px/44px "Liberation Sans", sans-serif; padding-left: 3px; text-shadow: 0 0 2px #712c00; }
.ink { position: absolute; left: 0; top: 0; width: 1920px; height: 1080px; fill: none; stroke: #ed1c24; stroke-width: 3; stroke-linecap: round; stroke-linejoin: round; pointer-events: none; }
.wm { position: absolute; left: 1679px; top: 1051px; font: 16px/20px "Liberation Sans", sans-serif; color: rgba(220,220,220,.65); }
</style>
